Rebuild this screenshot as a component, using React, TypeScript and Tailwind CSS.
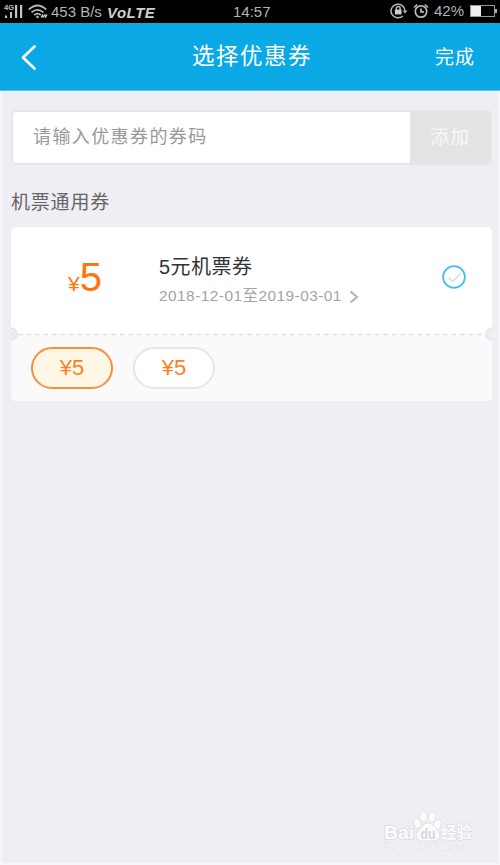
import type { ReactNode } from "react";

/** Mobile status bar: signal, network speed, clock, lock / alarm / battery. */
function StatusBar() {
  return (
    <div className="flex h-[23px] items-center bg-black text-[15px] leading-none text-[#b4b4b4]">
      <svg className="ml-[4px] h-[18px] w-[20px] shrink-0" viewBox="0 0 20 18" fill="#c4c4c4">
        <rect x="1" y="12.5" width="2" height="2.5" />
        <rect x="6" y="9" width="2" height="6" />
        <rect x="11" y="2" width="2.2" height="13" />
        <rect x="16" y="2" width="2.2" height="13" />
        <text x="0" y="7" fontSize="7.5" fontWeight="700" fontFamily="Liberation Sans, sans-serif">
          4G
        </text>
      </svg>
      <svg className="ml-[4px] h-[18px] w-[21px] shrink-0" viewBox="0 0 21 18" fill="none" stroke="#b8b8b8" strokeWidth="1.7">
        <path d="M.8 6.5Q9.5-1.5 18.2 6.5" />
        <path d="M3.5 9.3q6-5 12 0" />
        <path d="M6.2 12q3.3-2.600 6.600 0" />
        <circle cx="9.5" cy="14" r="1.3" fill="#b8b8b8" stroke="none" />
        <path d="M12.500 14.500l2-4 2 4zM15.500 11.500h4.200l-2.100 4z" fill="#c8c8c8" stroke="none" />
      </svg>
      <span className="ml-[2px] w-[51px] whitespace-nowrap">453 B/s</span>
      <span className="ml-[5px] mt-[1px] w-[49px] whitespace-nowrap font-bold italic tracking-[0.5px] text-[#d0d0d0]">
        VoLTE
      </span>
      <span className="-mt-[1px] ml-[77px] w-[39px] whitespace-nowrap">14:57</span>
      <svg className="-mt-[1px] ml-[118px] h-[18px] w-[18px] shrink-0" viewBox="0 0 18 18" fill="none" stroke="#b8b8b8" strokeWidth="1.5">
        <path d="M12.8 14A7 6.800 0 1 1 15 8.500" />
        <path d="M12.500 8.500h5l-2.500 3z" fill="#b8b8b8" stroke="none" />
        <path d="M6.300 8V6.500a1.900 1.900 0 0 1 3.800 0V8" />
        <rect x="4.900" y="7.600" width="6.600" height="4.800" fill="#d0d0d0" stroke="none" />
      </svg>
      <svg className="-mt-[1px] ml-[4px] h-[18px] w-[18px] shrink-0" viewBox="0 0 18 18" fill="none" stroke="#b8b8b8" strokeWidth="1.7">
        <circle cx="9" cy="9.500" r="5.700" />
        <path d="M9 6.500v3.300h3M2 5.500l3.200-3M16 5.500l-3.200-3" />
      </svg>
      <span className="-mt-[2px] ml-[4px] w-[32px] whitespace-nowrap">42%</span>
      <svg className="-mt-[1px] ml-[3px] h-[14px] w-[28px] shrink-0" viewBox="0 0 28 14" fill="none">
        <rect x="1.5" y="1.5" width="24" height="11" stroke="#999" />
        <rect x="2" y="2" width="10" height="10" fill="#eee" />
        <rect x="26" y="5" width="2" height="4" fill="#aaa" />
      </svg>
    </div>
  );
}

function Header() {
  return (
    <header className="flex h-[68px] items-center border-b border-[#4fc3f3] bg-[#0aa9e6] text-white">
      <svg className="ml-[20px] h-[26px] w-[18px] shrink-0" viewBox="0 0 18 26" fill="none" stroke="currentColor" strokeWidth="2.6" strokeLinecap="round" strokeLinejoin="round">
        <path d="M14.5 2.5L3 13.5l11.500 11" />
      </svg>
      <h1 className="ml-[154px] mt-[1px] w-[122px] whitespace-nowrap text-[22.5px] leading-none tracking-[1.5px]">
        选择优惠券
      </h1>
      <button className="ml-[121px] mt-[1px] whitespace-nowrap text-[19px] leading-none tracking-[1px]">完成</button>
    </header>
  );
}

function CodeInput() {
  return (
    <div className="flex h-[55px] overflow-hidden rounded-[5px] border-2 border-[#e6e6e8] bg-white">
      <div className="flex flex-1 items-center pl-[20px] text-[18px] leading-none tracking-[1.4px] text-[#999]">
        <span className="-mt-[2px]">请输入优惠券的券码</span>
      </div>
      <button className="w-[80px] bg-[#e3e3e3] text-[19px] leading-none tracking-[1px] text-[#f8f8f8]">
        添加
      </button>
    </div>
  );
}

function Chip({ selected, children }: { selected?: boolean; children: ReactNode }) {
  return (
    <button
      className={`flex h-[42px] w-[82px] items-center justify-center rounded-full border-2 text-[22px] leading-none text-[#ff7e1f] ${
        selected ? "border-[#f98f3d] bg-[#fff7e6]" : "border-[#e6e6e6] bg-white"
      }`}
    >
      {children}
    </button>
  );
}

function Coupon() {
  return (
    <section className="relative h-[174px] overflow-hidden rounded-[5px] bg-white">
      <div className="flex h-[107px]">
        <div className="flex w-[148px] items-baseline pl-[57px] pt-[30px] leading-none text-[#ff7608]">
          <span className="text-[21px]">¥</span>
          <span className="text-[40px]">5</span>
        </div>
        <div className="flex-1 pt-[30px]">
          <h2 className="whitespace-nowrap text-[20px] leading-[20px] tracking-[0.5px] text-[#333]">5元机票券</h2>
          <p className="mt-[11px] flex items-center whitespace-nowrap text-[15.5px] leading-[16px] tracking-[0.42px] text-[#a4a4a4]">
            2018-12-01至2019-03-01
            <svg className="ml-[7px] mt-[2px] h-[14px] w-[10px]" viewBox="0 0 10 14" fill="none" stroke="#b4b4b4" strokeWidth="2.2">
              <path d="M1.5 1.5l6.5 5.5-6.5 5.5" />
            </svg>
          </p>
        </div>
        <svg className="mr-[26px] mt-[38px] h-[24px] w-[24px]" viewBox="0 0 24 24" fill="none">
          <circle cx="12" cy="12" r="10.9" stroke="#45bdf0" strokeWidth="1.8" />
          <path d="M6.5 12.5l3.8 4L18.5 9" stroke="#d5e5ee" strokeWidth="1.7" />
        </svg>
      </div>
      <div className="flex h-[67px] gap-[20px] bg-[#fafafa] pl-[20px] pt-[13px]">
        <Chip selected>¥5</Chip>
        <Chip>¥5</Chip>
      </div>
      {/* tear line with a notch on each side */}
      <svg className="absolute left-0 top-[100px] h-[14px] w-full" viewBox="0 0 481 14" fill="#ededf1" stroke="#e4e4e8" strokeWidth="1.5">
        <path d="M7 7.5H474" stroke="#e0e0e0" strokeDasharray="4.5 4" />
        <circle cx="0" cy="7" r="6" />
        <circle cx="481" cy="7" r="6" />
      </svg>
    </section>
  );
}

function Watermark() {
  return (
    <svg className="absolute left-[380px] top-[806px] h-[50px] w-[100px]" viewBox="0 0 100 50" fill="#fbfbfc" stroke="#dfdfe3" strokeWidth="1.6" paintOrder="stroke">
      <ellipse cx="37.5" cy="17.5" rx="3.2" ry="4.3" transform="rotate(-15 37.5 17.5)" />
      <ellipse cx="43.5" cy="10.5" rx="3.3" ry="4.8" />
      <ellipse cx="52" cy="11" rx="3.3" ry="4.8" transform="rotate(12 52 11)" />
      <ellipse cx="57.5" cy="18.5" rx="3.2" ry="4.5" transform="rotate(15 57.5 18.5)" />
      <path d="M47.5 17.5c-4 0-5 3.5-8 6.5-4 3.500-4 10.500 2 10.500h12.500c6 0 6-6 3.500-9.500-3-3.500-4.500-7.500-10-7.500z" />
      <g fontFamily="Liberation Sans, Noto Sans CJK SC, sans-serif">
        <text x="4" y="32.5" fontSize="19" fontWeight="700" strokeWidth="2" textLength="30" lengthAdjust="spacingAndGlyphs">
          Bai
        </text>
        <text x="40.5" y="32.5" fontSize="14" fontWeight="700" textLength="15" lengthAdjust="spacingAndGlyphs" fill="#d6d6da" stroke="none">
          du
        </text>
        <text x="61" y="32" fontSize="15.5" fontWeight="700" textLength="31">
          经验
        </text>
        <text x="4" y="44" fontSize="10.5" textLength="88" fill="#fafafc" stroke="#e4e4e8" strokeWidth="1.2">
          jingyan.baidu.com
        </text>
      </g>
    </svg>
  );
}

export default function App() {
  return (
    <div className="relative h-[865px] w-[500px] overflow-hidden bg-[#efeef4] font-['Liberation_Sans','Noto_Sans_CJK_SC',sans-serif]">
      <StatusBar />
      <Header />
      <main className="flex h-[774px] flex-col border-b-2 border-l-2 border-r-2 border-[#f7f7fa] pl-[9px] pr-[6px] pt-[19px]">
        <CodeInput />
        <p className="mb-[14px] mt-[28px] text-[19px] leading-[20px] tracking-[0.8px] text-[#666]">机票通用券</p>
        <Coupon />
      </main>
      <Watermark />
    </div>
  );
}
